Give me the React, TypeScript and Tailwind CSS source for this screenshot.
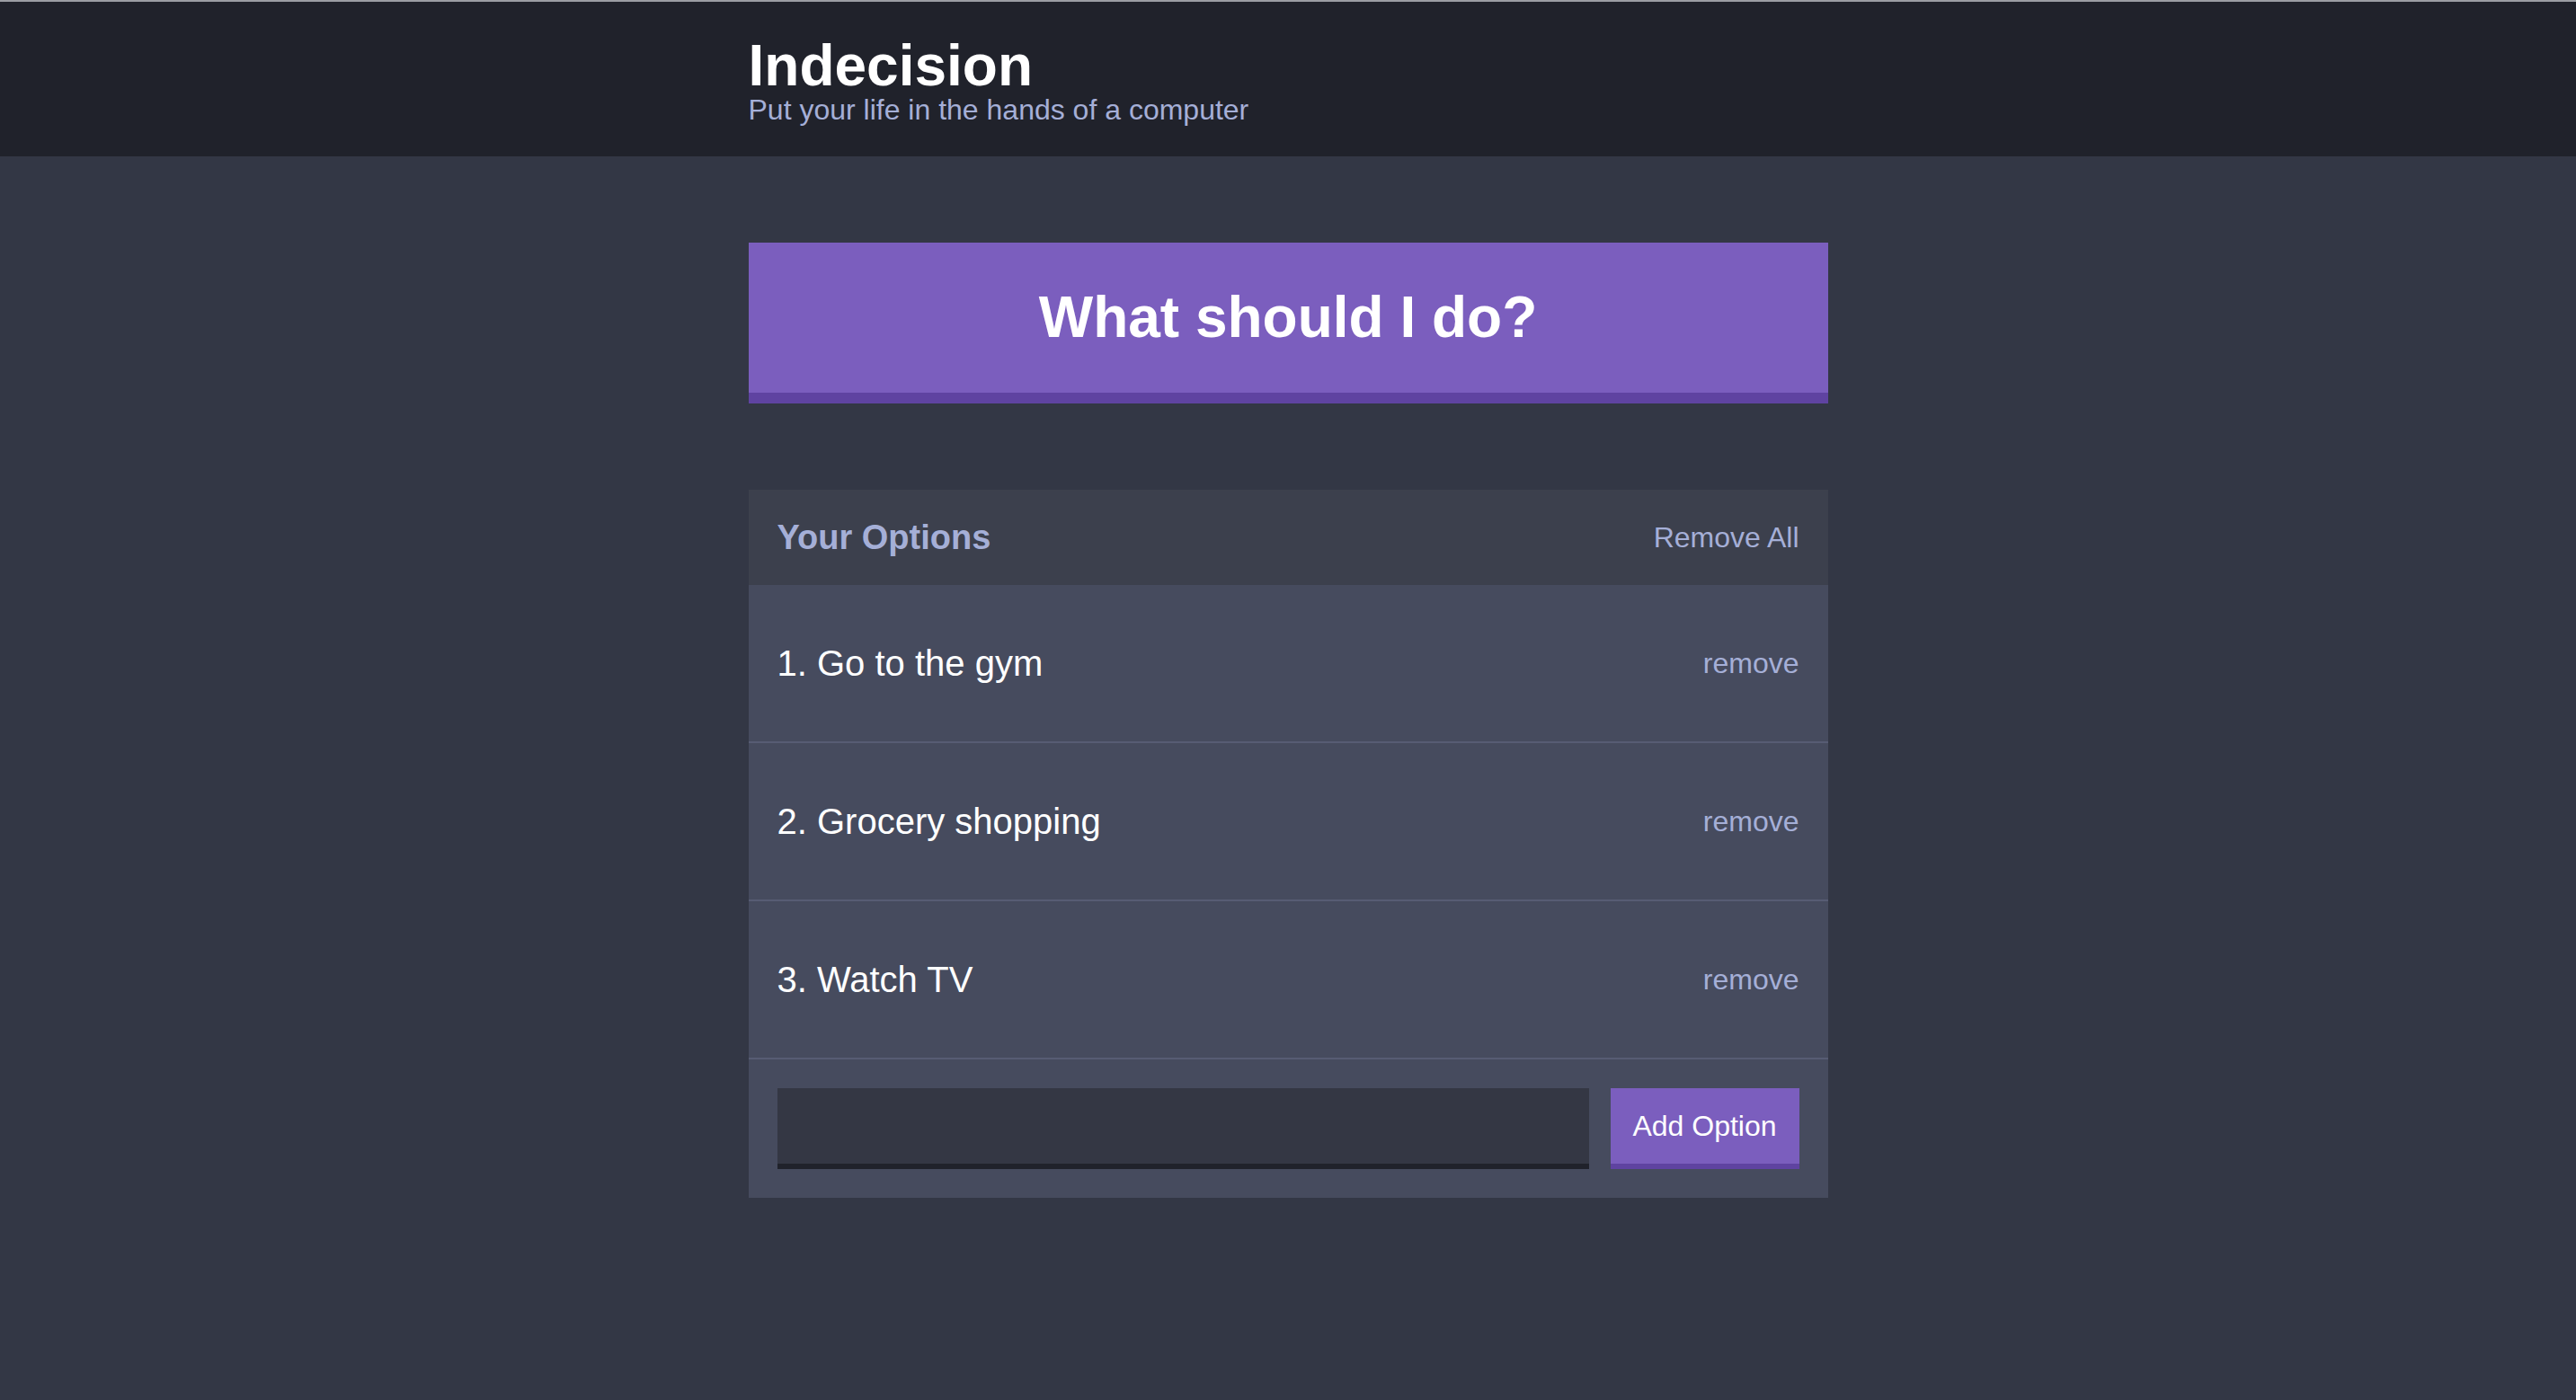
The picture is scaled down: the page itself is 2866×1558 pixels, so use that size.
import { useState } from 'react';

const initialOptions = ['Go to the gym', 'Grocery shopping', 'Watch TV'];

const Header = () => (
  <header className="bg-[#20222b] border-t-2 border-[#9b9da3] pt-[39px] pb-[35px]">
    <div className="w-[1201px] mx-auto">
      <h1 className="text-[64px] leading-[64px] font-bold text-white">Indecision</h1>
      <h2 className="text-[32px] leading-[34px] text-[#a5afd7]">Put your life in the hands of a computer</h2>
    </div>
  </header>
);

interface OptionRowProps {
  text: string;
  index: number;
  onRemove: () => void;
}

const OptionRow = ({ text, index, onRemove }: OptionRowProps) => (
  <div className="flex items-center justify-between px-8 py-[64px] border-b-2 border-[#575c73]">
    <p className="text-[40px] leading-[46px] text-white">
      {index}. {text}
    </p>
    <button
      type="button"
      onClick={onRemove}
      className="text-[32px] leading-[38px] text-[#a5afd7] cursor-pointer"
    >
      remove
    </button>
  </div>
);

export default function App() {
  const [options, setOptions] = useState<string[]>(initialOptions);
  const [value, setValue] = useState('');

  const handleAdd = (e: React.FormEvent) => {
    e.preventDefault();
    const option = value.trim();
    if (!option) return;
    setOptions((prev) => [...prev, option]);
    setValue('');
  };

  return (
    <div className="min-h-screen bg-[#333745]" style={{ fontFamily: '"Liberation Sans", Arial, sans-serif' }}>
      <Header />

      <main className="w-[1201px] mx-auto pt-[96px] pb-[96px]">
        {/* Big pick button */}
        <button
          type="button"
          className="w-full bg-[#7b5ebe] border-b-[12px] border-[#5f43a1] py-[48px] text-[64px] leading-[71px] font-bold text-white cursor-pointer"
        >
          What should I do?
        </button>

        {/* Options widget */}
        <div className="mt-[96px] bg-[#464b5e]">
          <div className="flex items-center justify-between px-8 py-8 bg-[#3c404d]">
            <h3 className="text-[38px] leading-[42px] font-bold text-[#a5afd7]">Your Options</h3>
            <button
              type="button"
              onClick={() => setOptions([])}
              className="text-[32px] leading-[38px] text-[#a5afd7] cursor-pointer"
            >
              Remove All
            </button>
          </div>

          {options.map((option, i) => (
            <OptionRow
              key={option + i}
              text={option}
              index={i + 1}
              onRemove={() => setOptions((prev) => prev.filter((_, j) => j !== i))}
            />
          ))}

          <form onSubmit={handleAdd} className="flex gap-6 p-8">
            <input
              type="text"
              value={value}
              onChange={(e) => setValue(e.target.value)}
              className="flex-1 h-[90px] bg-[#343744] border-b-[6px] border-[#20222b] px-6 text-[32px] text-[#a5afd7] outline-none"
            />
            <button
              type="submit"
              className="w-[210px] h-[90px] bg-[#7b5ebe] border-b-[6px] border-[#5f43a1] text-[32px] text-white cursor-pointer"
            >
              Add Option
            </button>
          </form>
        </div>
      </main>
    </div>
  );
}
